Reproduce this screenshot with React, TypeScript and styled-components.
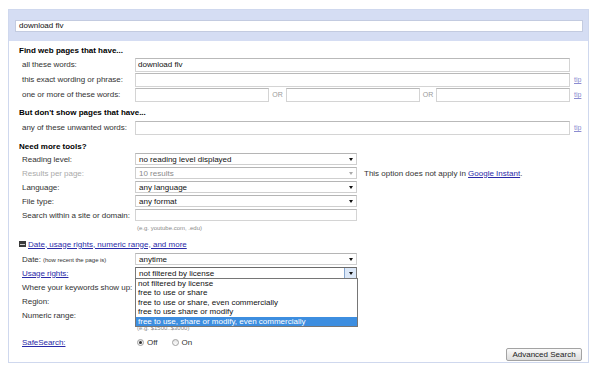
import styled, { createGlobalStyle } from "styled-components";

const GlobalStyle = createGlobalStyle`
  html, body { margin: 0; padding: 0; background: #fff; }
  body {
    font-family: "Liberation Sans", Arial, sans-serif;
    font-size: 8px;
    color: #333;
  }
  * { box-sizing: border-box; }
`;

const Page = styled.div`
  padding: 9px 0 0 8px;
`;

const Panel = styled.div`
  width: 581px;
  border: 1px solid #cfd8ee;
  background: #fff;
`;

const SearchBand = styled.div`
  background: #d5ddf3;
  padding: 10px 5px 9px 6px;
`;

const BandInput = styled.div`
  height: 12px;
  background: #fff;
  border: 1px solid #c3cbe0;
  padding-left: 3px;
  line-height: 10px;
  color: #111;
`;

const Body = styled.div`
  padding: 5px 0 1px 10px;
`;

const Heading = styled.div<{ $mt?: number }>`
  margin-top: ${(p) => p.$mt ?? 0}px;
  height: 10px;
  line-height: 10px;
  font-weight: bold;
  color: #000;
`;

const Row = styled.div<{ $h: number; $mt?: number }>`
  display: flex;
  align-items: center;
  height: ${(p) => p.$h}px;
  margin-top: ${(p) => p.$mt ?? 0}px;
  padding-left: 3px;
`;

const Label = styled.div<{ $muted?: boolean }>`
  width: 113px;
  flex: none;
  white-space: nowrap;
  letter-spacing: -0.05px;
  color: ${(p) => (p.$muted ? "#aaa" : "#333")};
`;

const Small = styled.span`
  font-size: 6px;
`;

const TextField = styled.div<{ $w: number; $h?: number }>`
  width: ${(p) => p.$w}px;
  height: ${(p) => p.$h ?? 14}px;
  flex: none;
  background: #fff;
  border: 1px solid #d4d4d4;
  border-top-color: #b9b9b9;
  padding-left: 2px;
  display: flex;
  align-items: center;
  color: #111;
`;

const Tip = styled.a`
  margin-left: 4px;
  font-size: 7px;
  color: #8c8cd0;
  text-decoration: underline;
`;

const Or = styled.div<{ $w: number }>`
  width: ${(p) => p.$w}px;
  flex: none;
  text-align: center;
  font-size: 7px;
  color: #9a9a9a;
`;

const SelectBox = styled.div<{ $disabled?: boolean; $focused?: boolean }>`
  position: relative;
  width: 222px;
  height: 12px;
  flex: none;
  display: flex;
  align-items: center;
  background: #fff;
  border: 1px solid ${(p) => (p.$focused ? "#7a7a7a" : "#cfcfcf")};
  border-top-color: ${(p) => (p.$focused ? "#6a6a6a" : "#b5b5b5")};
  color: ${(p) => (p.$disabled ? "#8a8a8a" : "#111")};
`;

const SelectValue = styled.span`
  flex: 1;
  padding-left: 3px;
  white-space: nowrap;
  overflow: hidden;
`;

const ArrowCell = styled.span<{ $focused?: boolean }>`
  width: 12px;
  height: 100%;
  flex: none;
  display: flex;
  align-items: center;
  justify-content: center;
  background: ${(p) => (p.$focused ? "#dce8f8" : "transparent")};
  border-left: 1px solid ${(p) => (p.$focused ? "#86a6cf" : "transparent")};
`;

const Arrow = styled.span<{ $disabled?: boolean }>`
  width: 0;
  height: 0;
  border-left: 2.5px solid transparent;
  border-right: 2.5px solid transparent;
  border-top: 3px solid ${(p) => (p.$disabled ? "#aaa" : "#111")};
`;

const Note = styled.span`
  margin-left: 7px;
  color: #333;
  white-space: nowrap;
`;

const Link = styled.a`
  color: #2a2aa8;
  text-decoration: underline;
  cursor: pointer;
`;

const Hint = styled.div<{ $mt?: number }>`
  margin-top: ${(p) => p.$mt ?? 0}px;
  height: 10px;
  line-height: 10px;
  padding-left: 118px;
  font-size: 6px;
  color: #8a8a8a;
`;

const Toggle = styled.div`
  margin-top: 6px;
  height: 10px;
  display: flex;
  align-items: center;
  gap: 2px;
`;

const MinusBox = styled.span`
  width: 7px;
  height: 6px;
  background: #3b3b3b;
  display: flex;
  align-items: center;
  justify-content: center;
  &::after {
    content: "";
    width: 5px;
    height: 1px;
    background: #cfcfcf;
  }
`;

const Dropdown = styled.div`
  position: absolute;
  top: 100%;
  left: -1px;
  width: 223px;
  background: #fff;
  border: 1px solid #767676;
  z-index: 5;
`;

const Option = styled.div<{ $active?: boolean }>`
  height: 9.4px;
  line-height: 9.4px;
  padding-left: 2px;
  white-space: nowrap;
  color: ${(p) => (p.$active ? "#fff" : "#111")};
  background: ${(p) => (p.$active ? "#3d8ee0" : "#fff")};
`;

const Footer = styled.div`
  margin-top: 2px;
  height: 26px;
  display: flex;
  justify-content: space-between;
  padding-right: 6px;
`;

const RadioRow = styled.div`
  display: flex;
  align-items: center;
  height: 14px;
  padding-left: 3px;
`;

const Choice = styled.label`
  display: flex;
  align-items: center;
  margin-right: 12px;
  color: #333;
`;

const Radio = styled.span<{ $checked?: boolean }>`
  width: 7px;
  height: 7px;
  border-radius: 50%;
  border: 1px solid #a0a0a0;
  background: linear-gradient(#e2e2e2, #fff);
  display: flex;
  align-items: center;
  justify-content: center;
  margin: 0 3px 0 2px;
  &::after {
    content: "";
    width: 3px;
    height: 3px;
    border-radius: 50%;
    background: ${(p) => (p.$checked ? "#333" : "transparent")};
  }
`;

const Button = styled.button`
  align-self: flex-end;
  width: 76px;
  height: 13px;
  padding: 0;
  border: 1px solid #a3a3a3;
  border-radius: 2px;
  background: linear-gradient(#fafafa, #dcdcdc);
  font-family: "Liberation Sans", Arial, sans-serif;
  font-size: 8px;
  color: #222;
`;

type SelectProps = { value?: string; disabled?: boolean; focused?: boolean; children?: React.ReactNode };

const Select = ({ value, disabled, focused, children }: SelectProps) => (
  <SelectBox $disabled={disabled} $focused={focused}>
    <SelectValue>{value}</SelectValue>
    <ArrowCell $focused={focused}>
      <Arrow $disabled={disabled} />
    </ArrowCell>
    {children}
  </SelectBox>
);

const licenses = [
  "not filtered by license",
  "free to use or share",
  "free to use or share, even commercially",
  "free to use share or modify",
  "free to use, share or modify, even commercially",
];

export default function App() {
  return (
    <Page>
      <GlobalStyle />
      <Panel>
        <SearchBand>
          <BandInput>download flv</BandInput>
        </SearchBand>
        <Body>
          <Heading>Find web pages that have...</Heading>
          <Row $h={15} $mt={1}>
            <Label>all these words:</Label>
            <TextField $w={435}>download flv</TextField>
          </Row>
          <Row $h={15}>
            <Label>this exact wording or phrase:</Label>
            <TextField $w={435} />
            <Tip>tip</Tip>
          </Row>
          <Row $h={15}>
            <Label>one or more of these words:</Label>
            <TextField $w={134} />
            <Or $w={17}>OR</Or>
            <TextField $w={134} />
            <Or $w={16}>OR</Or>
            <TextField $w={134} />
            <Tip>tip</Tip>
          </Row>

          <Heading $mt={6}>But don't show pages that have...</Heading>
          <Row $h={15} $mt={2}>
            <Label>any of these unwanted words:</Label>
            <TextField $w={435} />
            <Tip>tip</Tip>
          </Row>

          <Heading $mt={7}>Need more tools?</Heading>
          <Row $h={14}>
            <Label>Reading level:</Label>
            <Select value="no reading level displayed" />
          </Row>
          <Row $h={14}>
            <Label $muted>Results per page:</Label>
            <Select value="10 results" disabled />
            <Note>
              This option does not apply in <Link>Google Instant</Link>.
            </Note>
          </Row>
          <Row $h={14}>
            <Label>Language:</Label>
            <Select value="any language" />
          </Row>
          <Row $h={14}>
            <Label>File type:</Label>
            <Select value="any format" />
          </Row>
          <Row $h={14}>
            <Label>Search within a site or domain:</Label>
            <TextField $w={222} $h={12} />
          </Row>
          <Hint $mt={1}>(e.g. youtube.com, .edu)</Hint>

          <Toggle>
            <MinusBox />
            <Link>Date, usage rights, numeric range, and more</Link>
          </Toggle>
          <Row $h={14} $mt={3}>
            <Label>
              Date: <Small>(how recent the page is)</Small>
            </Label>
            <Select value="anytime" />
          </Row>
          <Row $h={14}>
            <Label>
              <Link>Usage rights:</Link>
            </Label>
            <Select value="not filtered by license" focused>
              <Dropdown>
                {licenses.map((l, i) => (
                  <Option key={l} $active={i === licenses.length - 1}>
                    {l}
                  </Option>
                ))}
              </Dropdown>
            </Select>
          </Row>
          <Row $h={14}>
            <Label>Where your keywords show up:</Label>
            <Select />
          </Row>
          <Row $h={14}>
            <Label>Region:</Label>
            <Select />
          </Row>
          <Row $h={14}>
            <Label>Numeric range:</Label>
            <TextField $w={100} $h={12} />
          </Row>
          <Hint $mt={1}>(e.g. $1500..$3000)</Hint>

          <Footer>
            <RadioRow>
              <Label>
                <Link>SafeSearch:</Link>
              </Label>
              <Choice>
                <Radio $checked />
                Off
              </Choice>
              <Choice>
                <Radio />
                On
              </Choice>
            </RadioRow>
            <Button>Advanced Search</Button>
          </Footer>
        </Body>
      </Panel>
    </Page>
  );
}
